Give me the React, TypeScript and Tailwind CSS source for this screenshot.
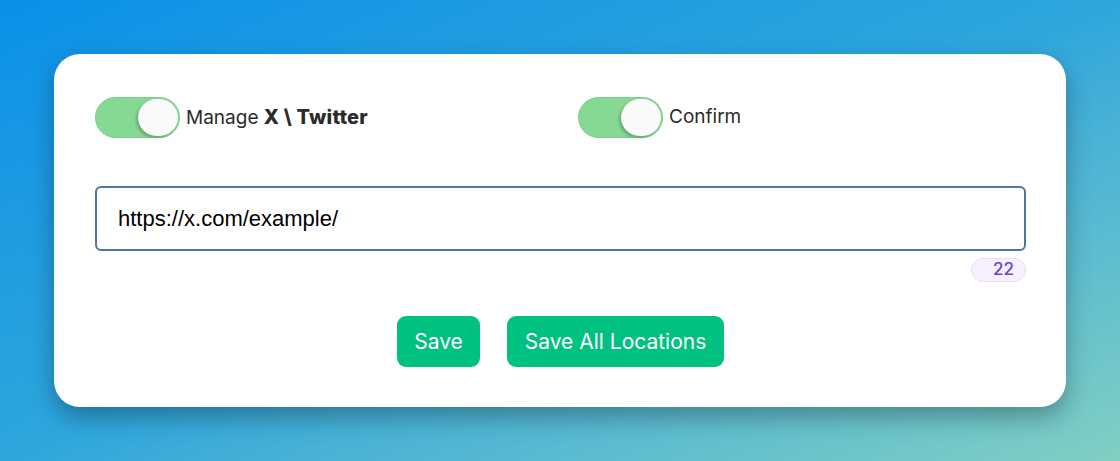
import { useState } from "react";

const Toggle = ({ on, onChange }: { on: boolean; onChange: () => void }) => (
  <button
    type="button"
    onClick={onChange}
    className={`relative h-[41px] w-[85px] shrink-0 rounded-full border border-[#7ccf8a] transition-colors ${
      on ? "bg-[#86d993]" : "bg-gray-300"
    }`}
  >
    <span
      className={`absolute top-[1px] h-[37px] w-[40px] rounded-full bg-[#fafafa] shadow-[-2px_2px_3px_rgba(0,0,0,0.22)] transition-all ${
        on ? "right-[1px]" : "left-[1px]"
      }`}
    />
  </button>
);

const App = () => {
  const [manage, setManage] = useState(true);
  const [confirm, setConfirm] = useState(true);
  const [url, setUrl] = useState("https://x.com/example/");

  return (
    <div className="flex h-[461px] w-full items-start justify-center bg-gradient-to-br from-[#0791e8] via-[#2ea6dc] to-[#80cfc2] pt-[54px] font-['Inter',sans-serif]">
      <div className="w-[1012px] rounded-[26px] bg-white pl-[41px] pr-[40px] pt-[43px] pb-[40px] shadow-[0_10px_25px_rgba(0,0,0,0.3)]">
        <div className="grid grid-cols-[483px_1fr]">
          <label className="flex items-center gap-[6px] text-[19px] text-[#2b2b2b]">
            <Toggle on={manage} onChange={() => setManage(!manage)} />
            <span>
              Manage <b className="text-[20px] font-extrabold tracking-[0.2px]">X \ Twitter</b>
            </span>
          </label>
          <label className="flex items-center gap-[6px] text-[19px] text-[#2b2b2b]">
            <Toggle on={confirm} onChange={() => setConfirm(!confirm)} />
            <span>Confirm</span>
          </label>
        </div>

        <input
          value={url}
          onChange={(e) => setUrl(e.target.value)}
          className="mt-[48px] block h-[65px] w-full rounded-[6px] border-2 border-[#4d76a3] px-[21px] font-['Liberation_Sans',sans-serif] text-[22px] text-black outline-none"
        />
        <div className="mt-[7px] flex justify-end">
          <span className="flex h-[24px] w-[55px] items-center justify-end rounded-full border border-[#e8ddfc] bg-[#f6f0ff] pr-[11px] text-[17px] font-medium text-[#6a42d4]">
            {url.length}
          </span>
        </div>

        <div className="mt-[34px] flex justify-center gap-[27px]">
          <button className="h-[51px] w-[83px] rounded-[9px] bg-[#00c17f] text-[21px] text-white">
            Save
          </button>
          <button className="h-[51px] w-[217px] rounded-[9px] bg-[#00c17f] text-[21px] text-white">
            Save All Locations
          </button>
        </div>
      </div>
    </div>
  );
};

export default App;
